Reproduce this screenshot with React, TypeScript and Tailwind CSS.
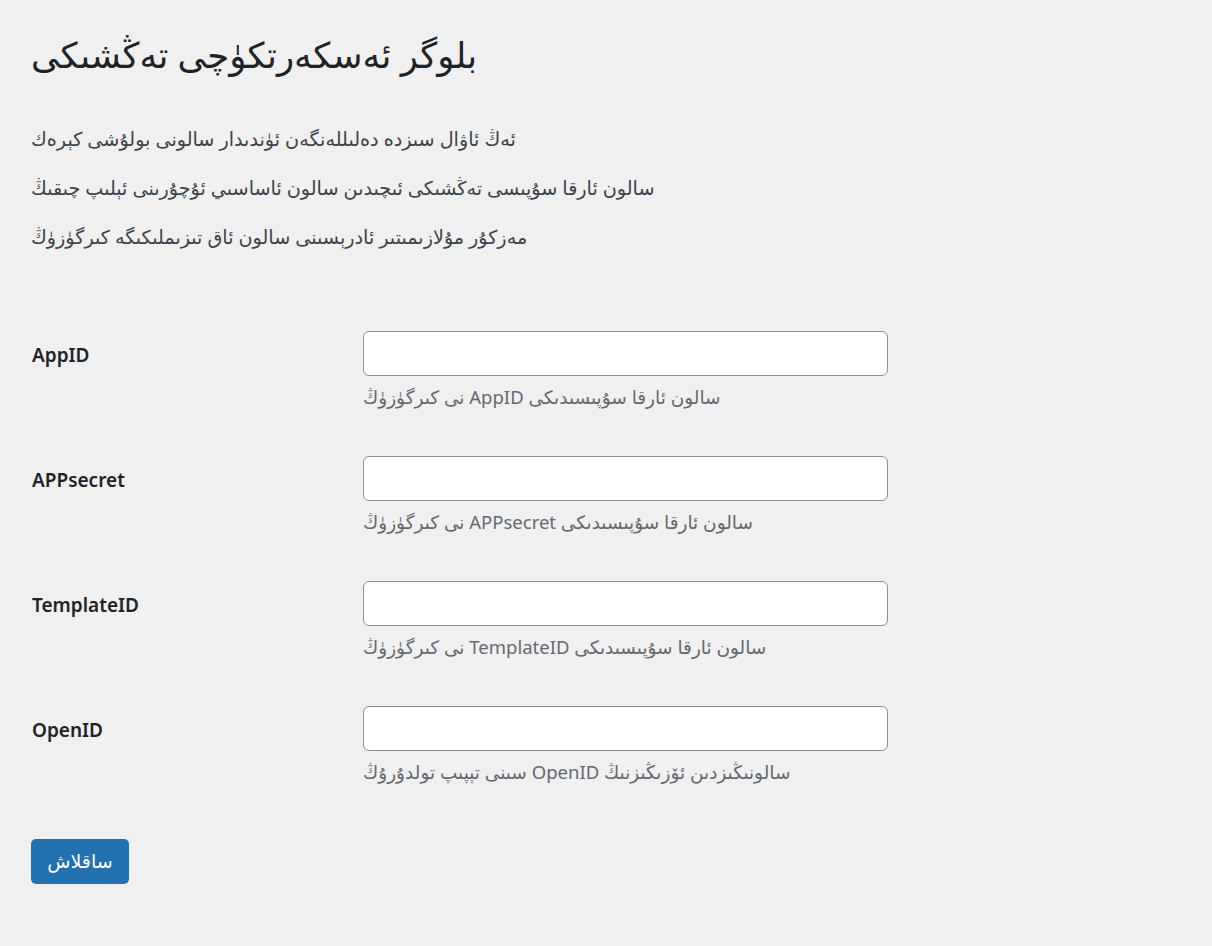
import React from 'react';

const FONT = { fontFamily: '"Noto Sans", "DejaVu Sans", sans-serif' };

interface FieldRow {
    label: string;
    hint: string;
}

const ROWS: FieldRow[] = [
    { label: 'AppID', hint: 'سالون ئارقا سۇپىسىدىكى AppID نى كىرگۈزۈڭ' },
    { label: 'APPsecret', hint: 'سالون ئارقا سۇپىسىدىكى APPsecret نى كىرگۈزۈڭ' },
    { label: 'TemplateID', hint: 'سالون ئارقا سۇپىسىدىكى TemplateID نى كىرگۈزۈڭ' },
    { label: 'OpenID', hint: 'سالونىڭىزدىن ئۆزىڭىزنىڭ OpenID سىنى تېپىپ تولدۇرۇڭ' },
];

const INTRO = [
    'ئەڭ ئاۋال سىزدە دەلىللەنگەن ئۈندىدار سالونى بولۇشى كېرەك',
    'سالون ئارقا سۇپىسى تەڭشىكى ئىچىدىن سالون ئاساسىي ئۇچۇرىنى ئېلىپ چىقىڭ',
    'مەزكۇر مۇلازىمىتىر ئادرېسىنى سالون ئاق تىزىملىكىگە كىرگۈزۈڭ',
];

export default function App() {
    return (
        <div className="min-h-screen w-full bg-[#f0f0f1] pl-[31px] pr-[32px] pt-[31px] pb-10" style={FONT}>
            <h1 dir="rtl" className="text-left text-[35.5px] leading-[46px] font-normal text-[#1d2327]">
                بلوگر ئەسكەرتكۈچى تەڭشىكى
            </h1>

            <div className="mt-[47px] flex flex-col gap-[20px]">
                {INTRO.map((line) => (
                    <p key={line} dir="rtl" className="text-left text-[19.2px] leading-[29px] text-[#3c434a]">
                        {line}
                    </p>
                ))}
            </div>

            {/* settings table */}
            <div className="mt-[58px] flex flex-col">
                {ROWS.map((row) => (
                    <div key={row.label} className="flex pt-[22px] pb-[23px]">
                        <div className="w-[332px] shrink-0 pl-px text-[19px] leading-[49px] font-semibold text-[#1d2327]">
                            {row.label}
                        </div>
                        <div className="flex flex-col">
                            <input
                                type="text"
                                className="h-[45px] w-[525px] rounded-[6px] border border-[#8c8f94] bg-white px-3 text-[19px] outline-none"
                            />
                            <p dir="rtl" className="mt-[6px] text-left text-[18.5px] leading-[29px] text-[#646970]">
                                {row.hint}
                            </p>
                        </div>
                    </div>
                ))}
            </div>

            <button
                type="button"
                className="mt-[30px] h-[45px] w-[98px] rounded-[5px] bg-[#2271b1] text-[19px] text-white"
            >
                ساقلاش
            </button>
        </div>
    );
}
